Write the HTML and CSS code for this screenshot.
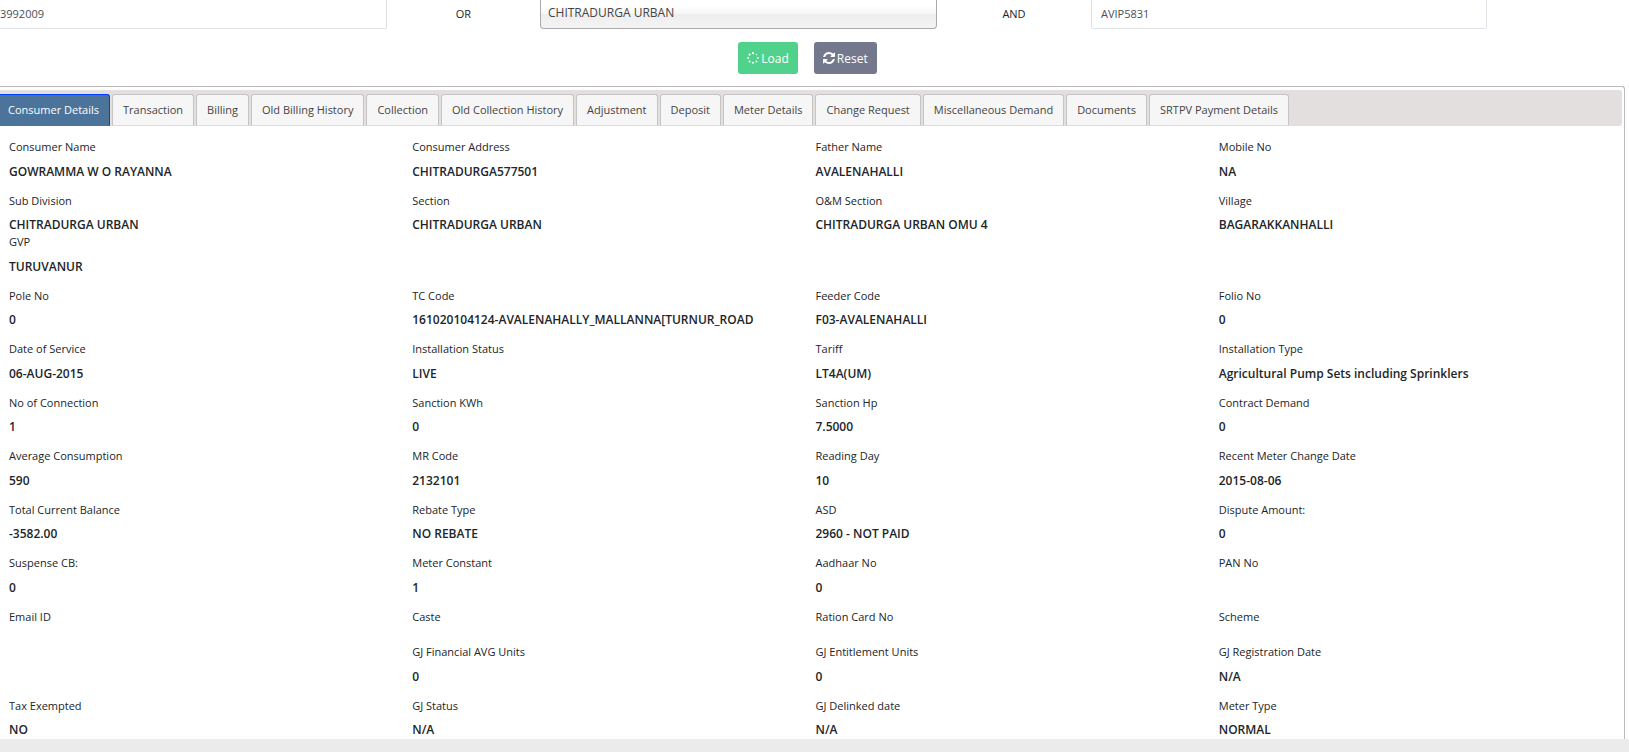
FILE: index.html
```
<!DOCTYPE html>
<html lang="en">

<head>
    <meta charset="UTF-8">
    <meta name="viewport" content="width=device-width, initial-scale=1.0">
    <title>Consumer Details</title>
    <link rel="stylesheet" href="styles.css">
</head>

<body>

    <!-- Search Section -->
    <form class="search">
        <div class="search-row">
            <input class="field field-first" type="text" value="3992009" aria-label="Account No">
            <span class="word">OR</span>
            <select class="field field-select" aria-label="Sub Division">
                <option>CHITRADURGA URBAN</option>
            </select>
            <span class="word">AND</span>
            <input class="field" type="text" value="AVIP5831" aria-label="RR No">
        </div>
        <div class="buttons">
            <button type="button" class="btn load-btn">
                <svg class="icon" viewBox="0 0 12 12" fill="#fff">
                    <circle cx="6" cy="1.2" r="1.1" />
                    <circle cx="9.4" cy="2.6" r=".7" />
                    <circle cx="10.8" cy="6" r=".9" />
                    <circle cx="9.4" cy="9.4" r="1" />
                    <circle cx="6" cy="10.8" r="1" />
                    <circle cx="2.6" cy="9.4" r="1" />
                    <circle cx="1.2" cy="6" r="1" />
                    <circle cx="2.6" cy="2.6" r="1.1" />
                </svg>
                Load
            </button>
            <button type="button" class="btn reset-btn">
                <svg class="icon" viewBox="0 0 1536 1536" fill="#fff">
                    <path d="M1511 928q0 5-1 7-64 268-268 434.500T764 1536q-146 0-282.500-55T238 1324l-129 129q-19 19-45 19t-45-19-19-45V960q0-26 19-45t45-19h448q26 0 45 19t19 45-19 45l-137 137q71 66 161 102t187 36q134 0 250-65t186-179q11-17 53-117 8-23 30-23h192q13 0 22.500 9.500t9.500 22.500zM1536 128v448q0 26-19 45t-45 19h-448q-26 0-45-19t-19-45 19-45l138-138Q969 256 768 256q-134 0-250 65T332 500q-11 17-53 117-8 23-30 23H50q-13 0-22.500-9.500T18 608v-7q65-268 270-434.500T768 0q146 0 284 55.500T1297 212l130-129q19-19 45-19t45 19 19 45z" />
                </svg>
                Reset
            </button>
        </div>
    </form>

    <div class="panel">
        <nav class="tabs">
            <button class="tab active">Consumer Details</button>
            <button class="tab">Transaction</button>
            <button class="tab">Billing</button>
            <button class="tab">Old Billing History</button>
            <button class="tab">Collection</button>
            <button class="tab">Old Collection History</button>
            <button class="tab">Adjustment</button>
            <button class="tab">Deposit</button>
            <button class="tab">Meter Details</button>
            <button class="tab">Change Request</button>
            <button class="tab">Miscellaneous Demand</button>
            <button class="tab">Documents</button>
            <button class="tab">SRTPV Payment Details</button>
        </nav>

        <!-- Consumer Details Section -->
        <div class="details">
            <dl class="row">
                <div><dt>Consumer Name</dt><dd>GOWRAMMA W O RAYANNA</dd></div>
                <div><dt>Consumer Address</dt><dd>CHITRADURGA577501</dd></div>
                <div><dt>Father Name</dt><dd>AVALENAHALLI</dd></div>
                <div><dt>Mobile No</dt><dd>NA</dd></div>
            </dl>
            <dl class="row tight">
                <div><dt>Sub Division</dt><dd>CHITRADURGA URBAN</dd></div>
                <div><dt>Section</dt><dd>CHITRADURGA URBAN</dd></div>
                <div><dt>O&amp;M Section</dt><dd>CHITRADURGA URBAN OMU 4</dd></div>
                <div><dt>Village</dt><dd>BAGARAKKANHALLI</dd></div>
            </dl>
            <dl class="row">
                <div><dt>GVP</dt><dd>TURUVANUR</dd></div>
            </dl>
            <dl class="row">
                <div><dt>Pole No</dt><dd>0</dd></div>
                <div><dt>TC Code</dt><dd>161020104124-AVALENAHALLY_MALLANNA[TURNUR_ROAD</dd></div>
                <div><dt>Feeder Code</dt><dd>F03-AVALENAHALLI</dd></div>
                <div><dt>Folio No</dt><dd>0</dd></div>
            </dl>
            <dl class="row">
                <div><dt>Date of Service</dt><dd>06-AUG-2015</dd></div>
                <div><dt>Installation Status</dt><dd>LIVE</dd></div>
                <div><dt>Tariff</dt><dd>LT4A(UM)</dd></div>
                <div><dt>Installation Type</dt><dd>Agricultural Pump Sets including Sprinklers</dd></div>
            </dl>
            <dl class="row">
                <div><dt>No of Connection</dt><dd>1</dd></div>
                <div><dt>Sanction KWh</dt><dd>0</dd></div>
                <div><dt>Sanction Hp</dt><dd>7.5000</dd></div>
                <div><dt>Contract Demand</dt><dd>0</dd></div>
            </dl>
            <dl class="row">
                <div><dt>Average Consumption</dt><dd>590</dd></div>
                <div><dt>MR Code</dt><dd>2132101</dd></div>
                <div><dt>Reading Day</dt><dd>10</dd></div>
                <div><dt>Recent Meter Change Date</dt><dd>2015-08-06</dd></div>
            </dl>
            <dl class="row">
                <div><dt>Total Current Balance</dt><dd>-3582.00</dd></div>
                <div><dt>Rebate Type</dt><dd>NO REBATE</dd></div>
                <div><dt>ASD</dt><dd>2960 - NOT PAID</dd></div>
                <div><dt>Dispute Amount:</dt><dd>0</dd></div>
            </dl>
            <dl class="row">
                <div><dt>Suspense CB:</dt><dd>0</dd></div>
                <div><dt>Meter Constant</dt><dd>1</dd></div>
                <div><dt>Aadhaar No</dt><dd>0</dd></div>
                <div><dt>PAN No</dt><dd></dd></div>
            </dl>
            <dl class="row">
                <div><dt>Email ID</dt><dd></dd></div>
                <div><dt>Caste</dt><dd></dd></div>
                <div><dt>Ration Card No</dt><dd></dd></div>
                <div><dt>Scheme</dt><dd></dd></div>
            </dl>
            <dl class="row">
                <div></div>
                <div><dt>GJ Financial AVG Units</dt><dd>0</dd></div>
                <div><dt>GJ Entitlement Units</dt><dd>0</dd></div>
                <div><dt>GJ Registration Date</dt><dd>N/A</dd></div>
            </dl>
            <dl class="row tight">
                <div><dt>Tax Exempted</dt><dd>NO</dd></div>
                <div><dt>GJ Status</dt><dd>N/A</dd></div>
                <div><dt>GJ Delinked date</dt><dd>N/A</dd></div>
                <div><dt>Meter Type</dt><dd>NORMAL</dd></div>
            </dl>
        </div>
    </div>

</body>

</html>
```

FILE: styles.css
```
* {
    box-sizing: border-box;
}

body {
    font-family: "Open Sans", "Noto Sans", sans-serif;
    font-size: 11px;
    line-height: 1.5;
    color: #212529;
    background: #ebebeb;
    margin: 0;
}

.search {
    background: white;
    padding-bottom: 12px;
}

.search-row {
    display: grid;
    grid-template-columns: 387fr 153fr 397fr 154fr 396fr 142fr;
    align-items: center;
}

.field {
    width: 100%;
    height: 29px;
    padding: 0 9px 2px;
    border: 1px solid #dee2e6;
    border-top: none;
    border-radius: 0 0 2px 2px;
    background: white;
    color: #495057;
    font-family: inherit;
    font-size: 11px;
}

.field-first {
    border-left: none;
    padding-left: 0;
}

.field-select {
    appearance: none;
    padding: 0 7px 4px;
    border-color: #aaa;
    border-radius: 0 0 4px 4px;
    background: linear-gradient(#fff 20%, #f6f6f6 50%, #eee 52%, #f4f4f4 100%);
    color: #444;
    font-size: 12px;
}

.word {
    text-align: center;
}

.buttons {
    display: flex;
    justify-content: center;
    gap: 16px;
    padding-top: 13px;
    padding-right: 14px;
}

.btn {
    display: flex;
    align-items: center;
    justify-content: center;
    gap: 2px;
    height: 32px;
    padding: 0 9px;
    border: none;
    border-radius: 3px;
    color: white;
    font-family: inherit;
    font-size: 12px;
    cursor: pointer;
}

.icon {
    width: 12px;
    height: 12px;
}

.load-btn {
    background: #51d28c;
}

.reset-btn {
    background: #74788d;
}

.panel {
    background: white;
    border-top: 1px solid #bbb;
    border-right: 1px solid #bbb;
    border-radius: 0 3px 0 0;
    margin-right: 4px;
    padding: 3px 2px 0 0;
    box-shadow: 4px 0 0 white;
}

.tabs {
    display: flex;
    gap: 2px;
    padding-top: 4px;
    background: #e3dfdf;
    border-radius: 0 3px 3px 0;
}

.tab {
    height: 32px;
    padding: 0 10px 2px;
    border: 1px solid #c5c5c5;
    border-bottom-color: #ddd;
    border-radius: 3px 3px 0 0;
    background: #f6f6f6;
    color: #454545;
    font-family: inherit;
    font-size: 11px;
    cursor: pointer;
}

.tab.active {
    padding-left: 8px;
    border-left: none;
    border-color: #003eff;
    border-bottom-color: #4c749b;
    border-radius: 0 3px 0 0;
    background: #4c749b;
    color: white;
}

.details {
    padding: 13px 0 0 9px;
}

.row {
    display: grid;
    grid-template-columns: repeat(4, 1fr);
    margin: 0;
    padding-bottom: 12px;
}

.row.tight {
    padding-bottom: 0;
}

dt {
    margin-bottom: 7px;
}

dd {
    margin: 0;
    font-size: 12px;
    font-weight: 600;
}
```
